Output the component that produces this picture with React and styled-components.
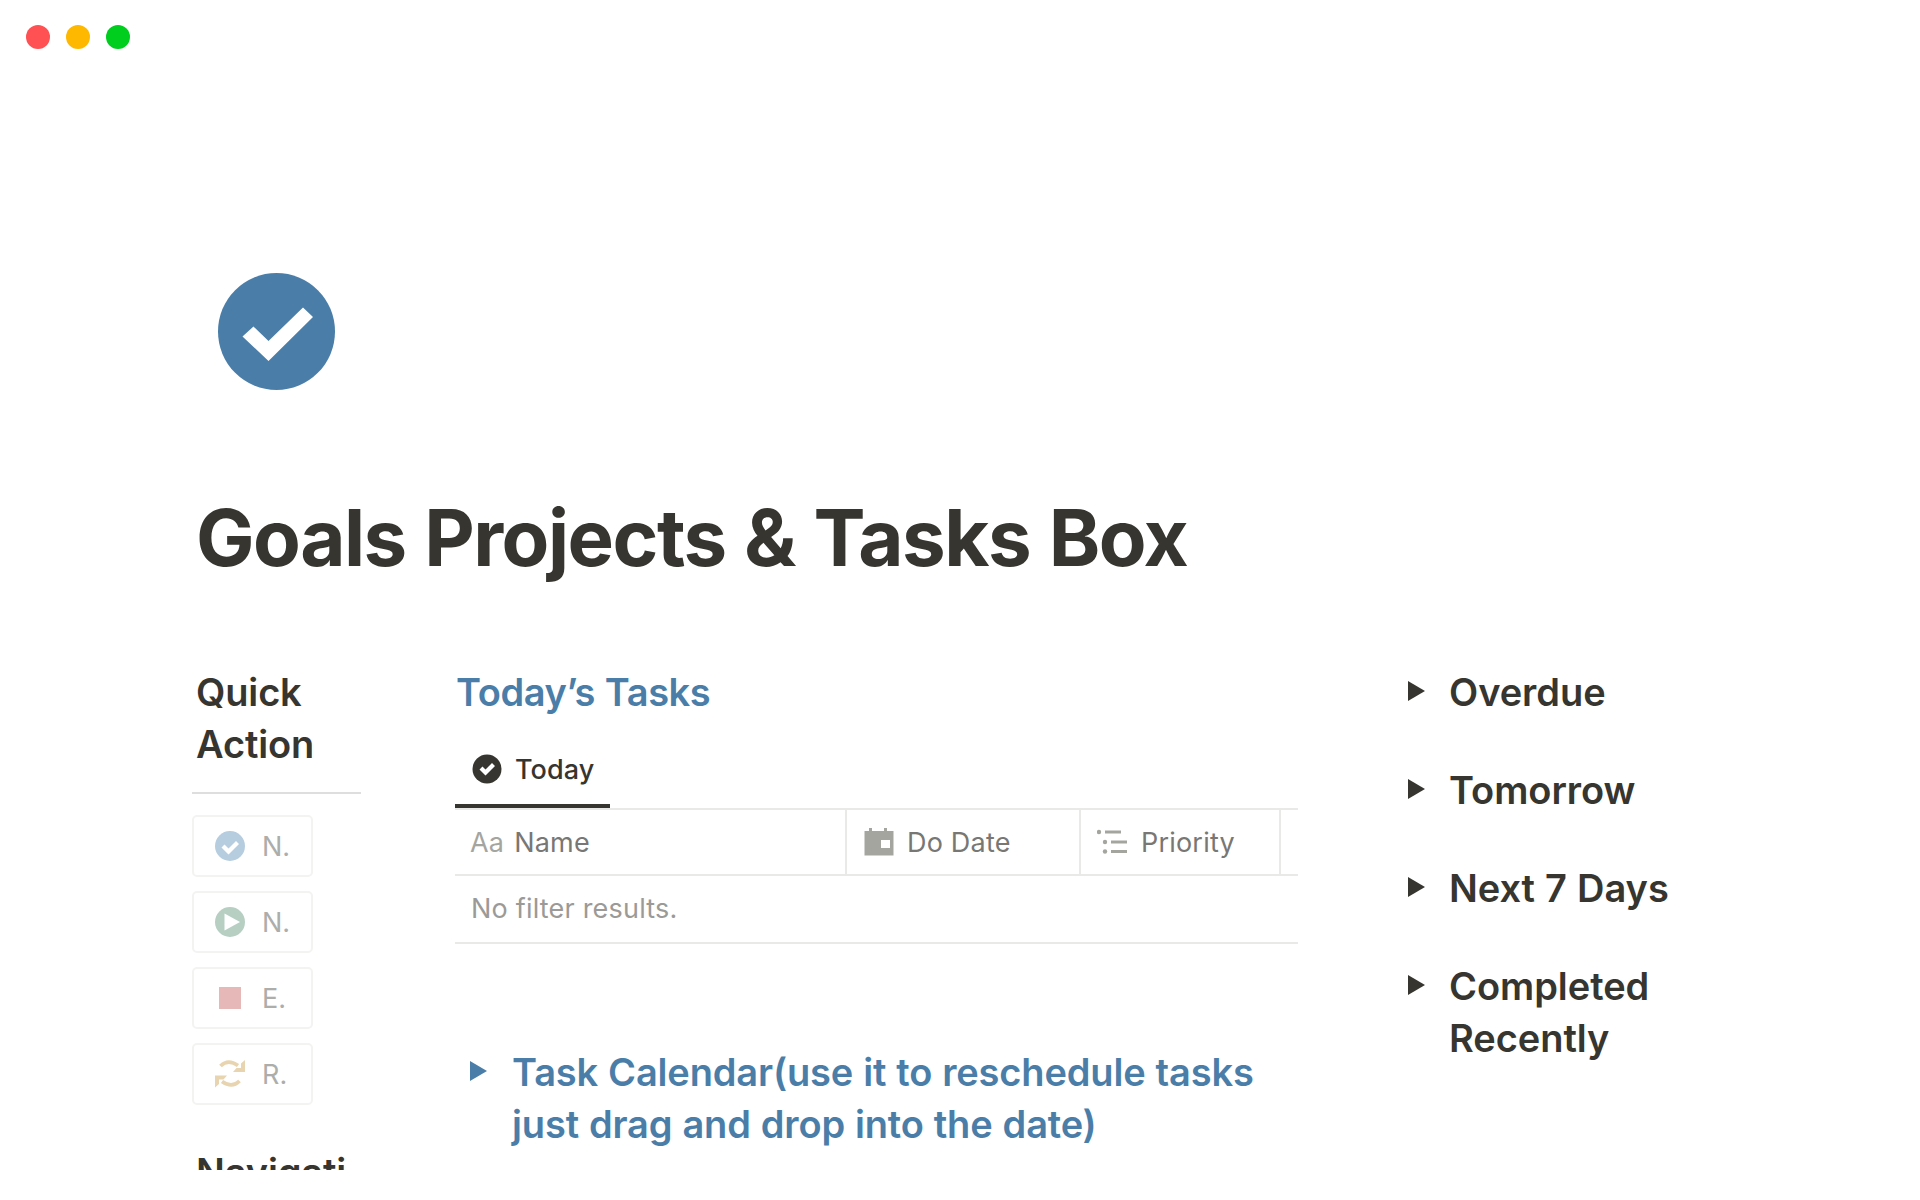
import React from "react";
import styled, { createGlobalStyle } from "styled-components";

const Global = createGlobalStyle`
  html, body { margin: 0; padding: 0; background: #fff; }
  body { font-family: Inter, "Noto Sans", sans-serif; color: #37352f; }
  * { box-sizing: border-box; }
`;

const Page = styled.div`
  height: 1170px;
  overflow: hidden;
  position: relative;
`;

const WindowBar = styled.div`
  display: flex;
  gap: 16px;
  padding: 25px 0 0 26px;
  height: 273px;
`;

const Light = styled.span`
  width: 24px;
  height: 24px;
  border-radius: 50%;
  background: ${(p) => p.$c};
`;

const Content = styled.div`
  padding-left: 192px;
`;

const PageIcon = styled.svg`
  display: block;
  width: 117px;
  height: 117px;
  margin-left: 25.5px;
`;

const Title = styled.h1`
  margin: 100px 0 0 4px;
  font-size: 78px;
  line-height: 96px;
  font-weight: 700;
  letter-spacing: -1.5px;
  word-spacing: 1.5px;
  color: #37352f;
`;

const Columns = styled.div`
  display: flex;
  margin-top: 80px;
`;

const LeftCol = styled.div`
  width: 169px;
  flex: none;
`;

const MidCol = styled.div`
  width: 843px;
  margin-left: 94px;
  flex: none;
`;

const RightCol = styled.div`
  width: 300px;
  margin-left: 110px;
  flex: none;
`;

const Heading = styled.h2`
  margin: 0;
  font-size: 38px;
  line-height: 52px;
  font-weight: 600;
  letter-spacing: -0.15px;
  word-spacing: 0.6px;
  color: ${(p) => p.$c || "#37352f"};
`;

const MidHeading = styled(Heading)`
  padding-left: 1px;
  letter-spacing: -0.4px;
`;

const RightHeading = styled(Heading)`
  max-width: 240px;
  letter-spacing: -0.05px;
`;

const SideHeading = styled(Heading)`
  padding-left: 4px;
  overflow-wrap: anywhere;
`;

const Divider = styled.div`
  height: 2px;
  background: #dedede;
  margin: 22px 0 21px;
`;

const ActionList = styled.div`
  display: flex;
  flex-direction: column;
  gap: 14px;
  margin-bottom: 41px;
`;

const ActionButton = styled.div`
  width: 121px;
  height: 62px;
  border: 2px solid #f3f3f2;
  border-radius: 5px;
  display: flex;
  align-items: center;
  gap: 17px;
  padding-left: 21px;
  font-size: 27px;
  color: #adadaa;
`;

const ActionIcon = styled.svg`
  width: 30px;
  height: 30px;
  flex: none;
`;

const Tabs = styled.div`
  display: flex;
  height: 68px;
  margin-top: 24px;
  border-bottom: 2px solid #e9e9e7;
`;

const Tab = styled.div`
  width: 155px;
  height: 66px;
  flex: none;
  display: flex;
  align-items: center;
  gap: 13px;
  padding: 0 0 8px 17px;
  border-bottom: 4px solid #37352f;
  font-size: 27px;
  font-weight: 500;
  letter-spacing: 0.1px;
  color: #37352f;
`;

const HeadRow = styled.div`
  display: flex;
  height: 66px;
  border-bottom: 2px solid #e9e9e7;
`;

const HeadCell = styled.div`
  width: ${(p) => p.$w}px;
  flex: none;
  display: flex;
  align-items: center;
  gap: ${(p) => p.$gap}px;
  padding-left: ${(p) => p.$pad}px;
  border-right: 2px solid #e9e9e7;
  font-size: 27px;
  letter-spacing: 0.2px;
  color: #787774;
`;

const Aa = styled.span`
  color: #a5a5a0;
`;

const HeadIcon = styled.svg`
  width: 30px;
  height: 30px;
  flex: none;
`;

const EmptyRow = styled.div`
  height: 68px;
  display: flex;
  align-items: center;
  padding: 0 0 2px 16px;
  border-bottom: 2px solid #e9e9e7;
  font-size: 27px;
  letter-spacing: 0.2px;
  color: #9b9a97;
`;

const Toggle = styled.div`
  display: flex;
  margin-top: ${(p) => p.$mt || 0}px;
  padding-left: ${(p) => p.$pad || 0}px;
`;

const Arrow = styled.span`
  flex: none;
  width: 0;
  height: 0;
  border-style: solid;
  border-width: 10px 0 10px 17px;
  border-color: transparent transparent transparent ${(p) => p.$c};
  margin: 15px ${(p) => p.$gap}px 0 0;
`;

const ToggleList = styled.div`
  display: flex;
  flex-direction: column;
  gap: 46px;
`;

const PageCheck = () => (
  <PageIcon viewBox="0 0 117 117">
    <circle cx="58.5" cy="58.5" r="58.5" fill="#4a7ea8" />
    <path d="M24.5 63.5 L35.5 53.5 L50.5 68 L85 34.5 L95 44 L50.5 88 Z" fill="#fff" />
  </PageIcon>
);

const actions = [
  {
    t: "N.",
    icon: (
      <>
        <circle cx="15" cy="15" r="15" fill="#b6cddf" />
        <path d="M6.5 16.5 L9.5 13.5 L13.5 17.5 L21 10 L24 13 L13.5 23.5 Z" fill="#fff" />
      </>
    ),
  },
  {
    t: "N.",
    icon: (
      <>
        <circle cx="15" cy="15" r="15" fill="#b7cfc3" />
        <path d="M9.5 6.5 L25 15 L9.5 23.5 Z" fill="#fff" />
      </>
    ),
  },
  { t: "E.", icon: <rect x="4" y="4" width="22" height="22" fill="#e7b8b8" /> },
  {
    t: "R.",
    icon: (
      <>
        <g fill="none" stroke="#e8d4ae" strokeWidth="3.8">
          <path d="M5.5 7 Q13 -0.5 23 6.5" />
          <path d="M24.5 22 Q17 29.5 7 22.5" />
        </g>
        <g fill="#e8d4ae">
          <path d="M30 1 V13 H18 L21.5 9 H26 V4.5 Z" />
          <path d="M0 28.5 V16.5 H12 L8.5 20.5 H4 V25 Z" />
        </g>
      </>
    ),
  },
];

export default function App() {
  return (
    <Page>
      <Global />
      <WindowBar>
        <Light $c="#ff5153" />
        <Light $c="#ffb800" />
        <Light $c="#00ce1e" />
      </WindowBar>
      <Content>
        <PageCheck />
        <Title>Goals Projects &amp; Tasks Box</Title>
        <Columns>
          <LeftCol>
            <SideHeading>Quick Action</SideHeading>
            <Divider />
            <ActionList>
              {actions.map((a, i) => (
                <ActionButton key={i}>
                  <ActionIcon viewBox="0 0 30 30">{a.icon}</ActionIcon>
                  {a.t}
                </ActionButton>
              ))}
            </ActionList>
            <SideHeading>Navigation</SideHeading>
          </LeftCol>
          <MidCol>
            <MidHeading $c="#4a7ea8">Today’s Tasks</MidHeading>
            <Tabs>
              <Tab>
                <svg width="30" height="30" viewBox="0 0 30 30">
                  <circle cx="15" cy="15" r="14.5" fill="#37352f" />
                  <path d="M7.5 15.5 L10.5 12.5 L13.5 15.5 L20 9 L23 12 L13.5 21.5 Z" fill="#fff" />
                </svg>
                Today
              </Tab>
            </Tabs>
            <HeadRow>
              <HeadCell $w={392} $pad={15} $gap={10}>
                <Aa>Aa</Aa>Name
              </HeadCell>
              <HeadCell $w={234} $pad={17} $gap={13}>
                <HeadIcon viewBox="0 0 30 30">
                  <path
                    d="M0.5 4 H5 V1 H8 V4 H20 V1 H23 V4 H29.5 V28.5 H0.5 Z M17 13 V21 H26 V13 Z"
                    fill="#a5a5a0"
                    fillRule="evenodd"
                  />
                </HeadIcon>
                Do Date
              </HeadCell>
              <HeadCell $w={200} $pad={16} $gap={14}>
                <HeadIcon viewBox="0 0 30 30">
                  <g fill="#a5a5a0">
                    <circle cx="2" cy="5" r="2.2" />
                    <circle cx="8" cy="15" r="2.2" />
                    <circle cx="8" cy="24.5" r="2.2" />
                    <rect x="8" y="3.5" width="16" height="3" />
                    <rect x="14" y="13.5" width="16" height="3" />
                    <rect x="14" y="23" width="16" height="3" />
                  </g>
                </HeadIcon>
                Priority
              </HeadCell>
            </HeadRow>
            <EmptyRow>No filter results.</EmptyRow>
            <Toggle $mt={102} $pad={15}>
              <Arrow $c="#4a7ea8" $gap={25} />
              <Heading $c="#4a7ea8">
                Task Calendar(use it to reschedule tasks
                <br />
                just drag and drop into the date)
              </Heading>
            </Toggle>
          </MidCol>
          <RightCol>
            <ToggleList>
              {["Overdue", "Tomorrow", "Next 7 Days", "Completed Recently"].map((t) => (
                <Toggle key={t}>
                  <Arrow $c="#37352f" $gap={24} />
                  <RightHeading>{t}</RightHeading>
                </Toggle>
              ))}
            </ToggleList>
          </RightCol>
        </Columns>
      </Content>
    </Page>
  );
}
